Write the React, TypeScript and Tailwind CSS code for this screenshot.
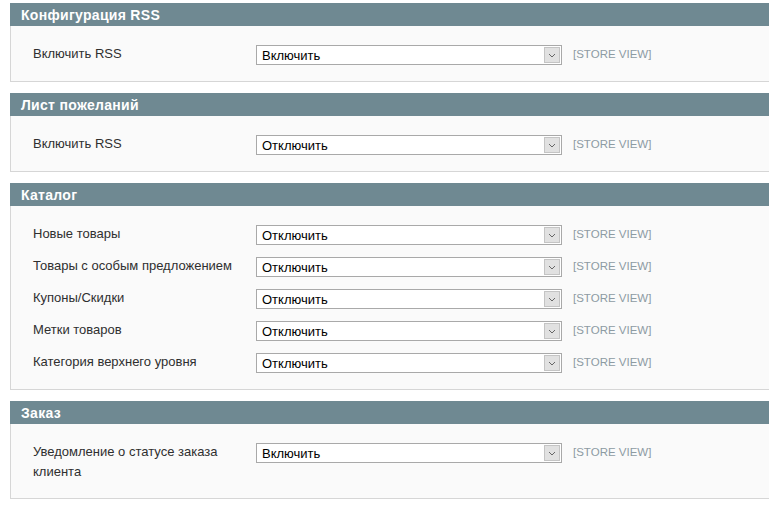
const sections = [
  { title: "Конфигурация RSS", rows: [{ label: "Включить RSS", value: "Включить" }] },
  { title: "Лист пожеланий", rows: [{ label: "Включить RSS", value: "Отключить" }] },
  {
    title: "Каталог",
    rows: [
      { label: "Новые товары", value: "Отключить" },
      { label: "Товары с особым предложением", value: "Отключить" },
      { label: "Купоны/Скидки", value: "Отключить" },
      { label: "Метки товаров", value: "Отключить" },
      { label: "Категория верхнего уровня", value: "Отключить" },
    ],
  },
  { title: "Заказ", rows: [{ label: "Уведомление о статусе заказа клиента", value: "Включить" }] },
];

const FakeSelect = ({ value }: { value: string }) => (
  <div className="mt-[2px] flex h-[20px] w-[306px] shrink-0 items-stretch border border-[#a9a9a9] bg-white">
    <div className="flex-1 pl-[5px] text-[13px] leading-[19px] text-black">{value}</div>
    <div className="m-[1px] flex w-[16px] items-center justify-center border border-[#c4c4c4] bg-[#e1e1e1]">
      <svg width="8" height="5" viewBox="0 0 8 5">
        <path d="M1 1 L4 4 L7 1" fill="none" stroke="#666" strokeWidth="1" />
      </svg>
    </div>
  </div>
);

export default function App() {
  return (
    <div className="h-[505px] w-[769px] overflow-hidden bg-white pt-[3px] font-['Liberation_Sans',Arial,sans-serif]">
      <div className="ml-[10px] flex w-[780px] flex-col gap-[11px]">
        {sections.map((section, i) => (
          <div key={i}>
            <div className="h-[23px] bg-[#6f8992] pl-[11px] text-[14px] font-bold leading-[24px] tracking-[0.3px] text-white">
              {section.title}
            </div>
            <div className="flex flex-col gap-[10px] border-b border-l border-[#d6d6d6] bg-[#fafafa] pb-[16px] pl-[22px] pt-[17px]">
              {section.rows.map((row, j) => (
                <div className="flex items-start" key={j}>
                  <div className="w-[223px] pr-[6px] pt-[1px] text-[13px] leading-[20px] text-[#2f2f2f]">{row.label}</div>
                  <FakeSelect value={row.value} />
                  <div className="ml-[11px] mt-[2px] text-[11.5px] leading-[18px] text-[#8d9ba3]">[STORE VIEW]</div>
                </div>
              ))}
            </div>
          </div>
        ))}
      </div>
    </div>
  );
}
